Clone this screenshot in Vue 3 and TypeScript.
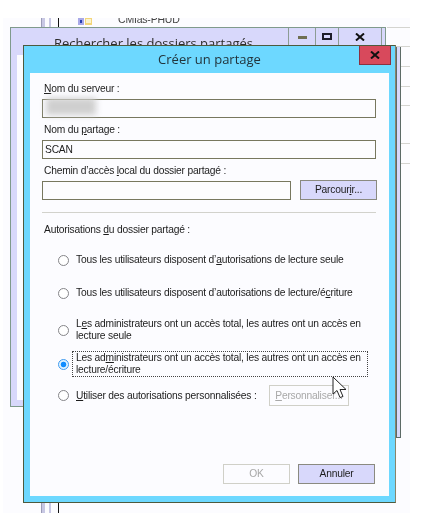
<template>
  <div class="canvas">
    <!-- explorer list peeking out behind the windows -->
    <div class="stripes top"><i class="s1"></i><i class="s2"></i><i class="s3"></i></div>
    <div class="stripes bottom"><i class="s1"></i><i class="s2"></i><i class="s3"></i></div>
    <svg class="tree-icon" viewBox="0 0 14 7">
      <rect x="0" y="0" width="6" height="7" fill="#a9a9e8" />
      <rect x="2" y="2" width="2" height="3" fill="#2a3fb0" />
      <rect x="7" y="0" width="7" height="7" fill="#f3d67a" />
      <rect x="8" y="1" width="5" height="4" fill="#fbf3d0" />
    </svg>
    <div class="tree-label"><span>CMIas-PHUD</span></div>
    <i v-for="y in sideLines" :key="y" class="side-line" :style="{ top: y + 'px' }"></i>
    <div class="side-strip"></div>

    <!-- window behind -->
    <div class="back-window">
      <div class="back-title">
        <span class="back-name">Rechercher les dossiers partagés</span>
        <div class="back-btn min"><i></i></div>
        <div class="back-btn max"><i></i></div>
        <div class="back-btn shut">
          <svg viewBox="0 0 10 8"><path d="M1 0.5 9 7.5M9 0.5 1 7.5" /></svg>
        </div>
        <div class="back-btn tail"></div>
      </div>
      <div class="back-body"></div>
    </div>

    <!-- dialog -->
    <div class="dialog">
      <div class="title-bar">
        <span>Créer un partage</span>
        <div class="close">
          <svg viewBox="0 0 10 8"><path d="M1 0.5 9 7.5M9 0.5 1 7.5" /></svg>
        </div>
      </div>
      <div class="body">
        <div class="field">
          <label><u>N</u>om du serveur :</label>
          <div class="input"><div class="smudge"></div></div>
        </div>
        <div class="field">
          <label>Nom du <u>p</u>artage :</label>
          <div class="input">SCAN</div>
        </div>
        <div class="field">
          <label>Chemin d’accès <u>l</u>ocal du dossier partagé :</label>
          <div class="path-row">
            <div class="input grow"></div>
            <button class="btn browse">Parcour<u>i</u>r...</button>
          </div>
        </div>
        <div class="separator"></div>
        <div class="group-label">Autorisations <u>d</u>u dossier partagé :</div>
        <div class="options">
          <div v-for="o in options" :key="o.post" class="option">
            <span class="radio" :class="{ on: o.on }"></span>
            <span class="opt-text" :class="{ focus: o.on }">{{ o.pre }}<u>{{ o.key }}</u>{{ o.post }}</span>
            <button v-if="o.custom" class="btn custom" disabled><u>P</u>ersonnaliser...</button>
          </div>
        </div>
        <div class="footer">
          <button class="btn ok" disabled>OK</button>
          <button class="btn cancel">Annuler</button>
        </div>
      </div>
    </div>

    <svg class="cursor" viewBox="0 0 16 23">
      <path d="M1 1V18L5 14.5 8 21.5 11 20.5 8 13.5H14Z" />
    </svg>
  </div>
</template>

<script setup lang="ts">
interface PermOption {
  pre: string
  key: string
  post: string
  on?: boolean
  custom?: boolean
}

const sideLines: number[] = [27, 46, 66, 86, 105, 143, 163]

const options: PermOption[] = [
  { pre: 'Tous les utilisateurs disposent d’', key: 'a', post: 'utorisations de lecture seule' },
  { pre: 'Tous les utilisateurs disposent d’autorisations de lecture/é', key: 'c', post: 'riture' },
  { pre: 'L', key: 'e', post: 's administrateurs ont un accès total, les autres ont un accès en lecture seule' },
  { pre: 'Les ad', key: 'm', post: 'inistrateurs ont un accès total, les autres ont un accès en lecture/écriture', on: true },
  { pre: '', key: 'U', post: 'tiliser des autorisations personnalisées :', custom: true }
]
</script>

<style>
html,
body {
  margin: 0;
  background: #fff;
}
</style>

<style scoped>
.canvas {
  position: relative;
  width: 426px;
  height: 518px;
  overflow: hidden;
  background: #fff;
  font-family: "Liberation Sans", Arial, sans-serif;
  font-size: 10.25px;
  letter-spacing: -0.2px;
  line-height: 12px;
  color: #1c1c1c;
  filter: blur(0.4px);
}
.canvas::before {
  content: "";
  position: absolute;
  left: 3px;
  top: 18px;
  width: 407px;
  height: 495px;
  background: #fcfcff;
}
.stripes {
  position: absolute;
  left: 41px;
  width: 18px;
  height: 9px;
}
.stripes.top {
  top: 18px;
}
.stripes.bottom {
  top: 503px;
  height: 10px;
}
.stripes i {
  position: absolute;
  top: 0;
  bottom: 0;
}
.s1 {
  left: 0;
  width: 3px;
  background: #c8c8e4;
  border-left: 1px solid #9c9cb8;
}
.s2 {
  left: 8px;
  width: 2px;
  background: #c8c8e4;
}
.s3 {
  left: 17px;
  width: 1px;
  background: #111;
}
.tree-icon {
  position: absolute;
  left: 78px;
  top: 18px;
  width: 14px;
  height: 7px;
}
.tree-label {
  position: absolute;
  left: 118px;
  top: 18px;
  height: 7px;
  overflow: hidden;
  line-height: 7px;
  font-size: 10.5px;
  color: #444;
}
.tree-label span {
  position: relative;
  top: -2px;
}
.side-line {
  position: absolute;
  left: 387px;
  width: 23px;
  height: 1px;
  background: #d4d4d0;
}
.side-strip {
  position: absolute;
  left: 396px;
  top: 47px;
  width: 3px;
  height: 390px;
  background: #d8d8f8;
  border: solid #5c6a66;
  border-width: 0 1px 1px;
  box-sizing: content-box;
}
.back-window {
  position: absolute;
  left: 10px;
  top: 27px;
  width: 376px;
  height: 380px;
  box-sizing: border-box;
  display: flex;
  flex-direction: column;
  background: #d8d8fb;
  border: 1px solid #7f9a8c;
}
.back-title {
  display: flex;
  height: 17px;
  flex: none;
}
.back-name {
  flex: 1;
  min-width: 0;
  padding: 6px 0 0 43px;
  font-family: "Open Sans", sans-serif;
  font-size: 13px;
  letter-spacing: 0;
  line-height: 18px;
  white-space: nowrap;
  color: #2c2c2c;
}
.back-btn {
  flex: none;
  display: flex;
  align-items: center;
  justify-content: center;
  box-sizing: border-box;
  height: 17px;
  border-left: 1px solid #8c9c94;
}
.back-btn.min {
  width: 27px;
}
.back-btn.min i {
  display: block;
  width: 9px;
  height: 3px;
  margin-top: 1px;
  background: #6f6f52;
}
.back-btn.max {
  width: 23px;
}
.back-btn.max i {
  display: block;
  width: 10px;
  height: 7px;
  box-sizing: border-box;
  border: 2px solid #1e1e2a;
}
.back-btn.shut {
  width: 43px;
}
.back-btn.shut svg,
.close svg {
  width: 10px;
  height: 8px;
  fill: none;
  stroke: #111;
  stroke-width: 2;
}
.back-btn.tail {
  width: 4px;
}
.back-body {
  margin: 10px 20px 6px 6px;
  flex: 1;
  background: #fcfcff;
}
.dialog {
  position: absolute;
  left: 23px;
  top: 45px;
  width: 373px;
  height: 458px;
  box-sizing: border-box;
  display: flex;
  flex-direction: column;
  padding: 0 6px 6px;
  background: #6dd8ff;
  border: 1px solid #4d5a3e;
  border-right-color: #8a8468;
}
.title-bar {
  position: relative;
  flex: none;
  height: 27px;
  text-align: center;
  font-family: "Open Sans", sans-serif;
  font-size: 13px;
  letter-spacing: 0;
  line-height: 27px;
  color: #22343c;
}
.close {
  position: absolute;
  top: 0;
  right: -2px;
  width: 32px;
  height: 19px;
  box-sizing: border-box;
  display: flex;
  align-items: center;
  justify-content: center;
  background: #d8495c;
  border: 1px solid #8c3040;
  border-top: 0;
}
.body {
  flex: 1;
  display: flex;
  flex-direction: column;
  padding: 9px 13px 12px 12px;
  background: #fcfcff;
}
.field {
  margin-bottom: 5px;
}
label {
  display: block;
  height: 14px;
  margin: 0 0 3px 2px;
  line-height: 14px;
  white-space: nowrap;
}
.input {
  position: relative;
  height: 19px;
  box-sizing: border-box;
  padding-left: 2px;
  line-height: 17px;
  background: #fcfcff;
  border: 1px solid #77775f;
}
.smudge {
  position: absolute;
  left: 3px;
  top: -2px;
  width: 50px;
  height: 17px;
  background: #cfcfcf;
  filter: blur(3px);
}
.path-row {
  display: flex;
  gap: 9px;
}
.grow {
  flex: 1;
}
.btn {
  height: 20px;
  padding: 0;
  box-sizing: border-box;
  font: inherit;
  letter-spacing: inherit;
  color: #1c1c1c;
  background: #d8d8fb;
  border: 1px solid #8a8a80;
}
.browse {
  width: 77px;
  margin-right: -1px;
  margin-top: -1px;
}
.separator {
  height: 1px;
  margin-top: 7px;
  background: #d2d2cc;
}
.group-label {
  margin: 10px 0 0 2px;
  line-height: 14px;
  white-space: nowrap;
}
.options {
  margin: 16px 0 0 16px;
}
.option {
  display: flex;
  align-items: center;
  position: relative;
  margin-top: 8px;
}
.option:nth-child(1) {
  margin-top: 0;
}
.option:nth-child(2) {
  margin-top: 19px;
}
.option:nth-child(3) {
  margin-top: 17px;
}
.radio {
  flex: none;
  width: 11px;
  height: 11px;
  margin-right: 3px;
  box-sizing: border-box;
  background: #fff;
  border: 1.5px solid #858589;
  border-radius: 50%;
}
.radio.on {
  background: radial-gradient(circle, #0f8cff 0 2.4px, #dff2ff 3.2px);
  border-color: #3f9bf0;
}
.opt-text {
  width: 296px;
  padding: 0 2px 0 3px;
  box-sizing: border-box;
  border: 1px dotted transparent;
}
.opt-text.focus {
  border-color: #444;
}
.option:last-child .opt-text {
  width: auto;
  white-space: nowrap;
}
.custom {
  position: absolute;
  left: 211px;
  top: 0;
  width: 80px;
  height: 21px;
  color: #a8a8a8;
  background: #fcfcff;
  border-color: #d0d0c8;
}
.option:last-child {
  height: 21px;
}
.footer {
  display: flex;
  justify-content: flex-end;
  gap: 8px;
  margin-top: auto;
  padding-right: 1px;
}
.ok {
  width: 67px;
  color: #a8a8a8;
  background: #fcfcff;
  border-color: #d0d0c8;
}
.cancel {
  width: 77px;
}
.cursor {
  position: absolute;
  left: 332px;
  top: 376px;
  width: 16px;
  height: 23px;
  fill: #fff;
  stroke: #222;
  stroke-width: 1;
}
</style>
